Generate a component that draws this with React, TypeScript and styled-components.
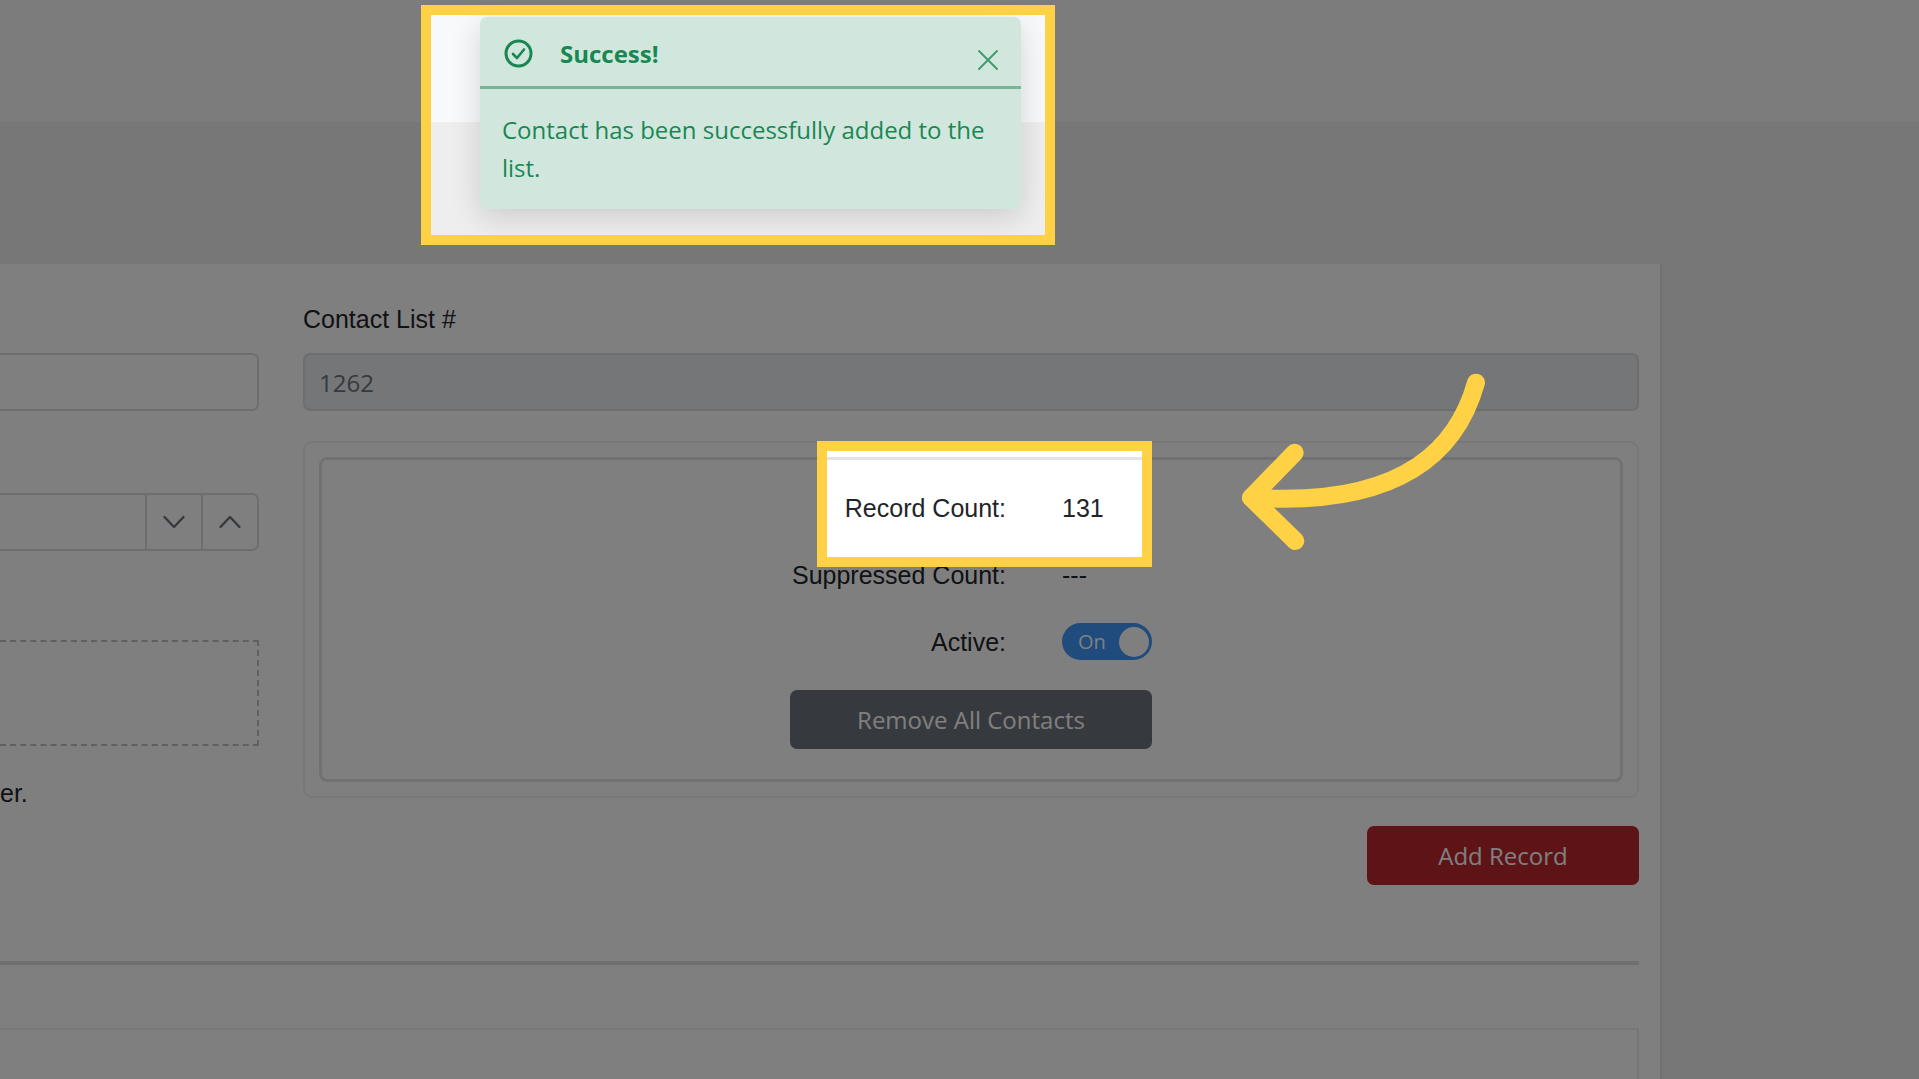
import React, { useState } from "react";
import styled, { createGlobalStyle } from "styled-components";

const sans = `"Liberation Sans", Arial, sans-serif`;
const ui = `"Segoe UI", "Open Sans", "Noto Sans", sans-serif`;
const highlight = "#ffd144";

const GlobalStyle = createGlobalStyle`
  *, *::before, *::after { box-sizing: border-box; }
  body { margin: 0; background: #eeeeee; color: #212529; font: 25px/39px ${sans}; }
  button, input { font-family: ${ui}; font-size: 24px; }
`;

const Page = styled.div`
  position: relative;
  min-height: 100vh;
  display: flex;
  flex-direction: column;
  overflow: hidden;
`;

const Header = styled.header`
  height: 122px;
  margin-bottom: 142px;
  background: #f8f9fb;
`;

const Card = styled.main`
  flex: 1;
  display: flex;
  flex-direction: column;
  margin-right: 257px;
  padding: 36px 21px 0 0;
  background: #ffffff;
  border-right: 2px solid #e2e2e2;
`;

const Columns = styled.div`
  display: grid;
  grid-template-columns: 259px minmax(0, 1fr);
  gap: 44px;
`;

const LeftColumn = styled.div`
  display: flex;
  flex-direction: column;
  padding-top: 53px;
`;

const RightColumn = styled.div`
  display: flex;
  flex-direction: column;
`;

const FieldLabel = styled.label`
  margin-bottom: 14px;
`;

const TextInput = styled.input<{ $openLeft?: boolean }>`
  width: 100%;
  height: 58px;
  padding: 0 14px;
  color: #6c757d;
  background: #ffffff;
  border: 2px solid #dadde1;
  border-left-width: ${(p) => (p.$openLeft ? 0 : "2px")};
  border-radius: ${(p) => (p.$openLeft ? "0 7px 7px 0" : "7px")};
  &:disabled {
    background: #e9ecef;
    opacity: 1;
  }
`;

const Stepper = styled.div`
  display: flex;
  height: 58px;
  margin: 82px 0 89px;
  border: 2px solid #dadde1;
  border-left: 0;
  border-radius: 0 7px 7px 0;
`;

const StepperInput = styled.input`
  flex: 1;
  min-width: 0;
  padding: 0 14px;
  border: 0;
  background: transparent;
`;

const StepButton = styled.button`
  width: 56px;
  padding: 0;
  display: grid;
  place-items: center;
  color: #6c757d;
  background: transparent;
  border: 0;
  border-left: 2px solid #dadde1;
`;

const DropZone = styled.div`
  height: 106px;
  margin-bottom: 28px;
  border: 2px dashed #bfc1c3;
  border-left: 0;
`;

const Hint = styled.p`
  margin: 0;
`;

const Summary = styled.section`
  margin: 30px 0 28px;
  padding: 14px;
  border: 2px solid #eef0ef;
  border-radius: 9px;
`;

const SummaryBody = styled.div`
  display: flex;
  justify-content: center;
  padding: 29px 0 30px;
  border: 3px solid #e1e3e6;
  border-radius: 8px;
`;

const Facts = styled.div`
  display: grid;
  grid-template-columns: 216px 90px;
  column-gap: 56px;
  row-gap: 28px;
`;

const FactLabel = styled.label`
  text-align: right;
  white-space: nowrap;
`;

const Switch = styled.span`
  position: relative;
  display: flex;
  align-items: center;
  justify-content: space-between;
  height: 37px;
  padding: 0 3px 0 16px;
  border-radius: 19px;
  background: #3e96fa;
  color: #ffffff;
  font: 20px/37px ${ui};
`;

const SwitchInput = styled.input`
  position: absolute;
  inset: 0;
  width: 100%;
  height: 100%;
  margin: 0;
  opacity: 0;
`;

const Knob = styled.span`
  width: 30px;
  height: 30px;
  border-radius: 50%;
  background: #ffffff;
`;

const ActionButton = styled.button<{ $tone: string }>`
  height: 59px;
  padding: 0;
  color: #ffffff;
  background: ${(p) => p.$tone};
  border: 0;
  border-radius: 7px;
`;

const RemoveButton = styled(ActionButton)`
  grid-column: 1 / -1;
`;

const AddButton = styled(ActionButton)`
  width: 272px;
  align-self: flex-end;
`;

const Divider = styled.hr`
  width: 100%;
  height: 4px;
  margin: 76px 0 63px;
  border: 0;
  background: #e1e1e1;
`;

const Records = styled.section`
  flex: 1;
  border: 2px solid #eceef2;
  border-width: 2px 2px 0 0;
`;

const Toast = styled.div`
  position: absolute;
  left: 480px;
  top: 17px;
  width: 541px;
  color: #198754;
  background: #d1e7dd;
  border-radius: 7px;
  box-shadow: 0 8px 30px rgba(0, 0, 0, 0.15);
  font: 24px/38px ${ui};
`;

const ToastHeader = styled.div`
  display: flex;
  align-items: center;
  gap: 27px;
  height: 72px;
  padding: 4px 22px 0 24px;
  border-bottom: 3px solid #75b798;
`;

const ToastTitle = styled.strong`
  flex: 1;
`;

const CloseButton = styled.button`
  display: grid;
  padding: 12px 0 0;
  color: #419b70;
  background: transparent;
  border: 0;
`;

const ToastMessage = styled.p`
  margin: 0;
  padding: 22px;
`;

const Shade = styled.div`
  position: absolute;
  inset: 0;
  pointer-events: none;
  background: rgba(0, 0, 0, 0.5);
  clip-path: polygon(
    evenodd,
    0 0, 100% 0, 100% 100%, 0 100%, 0 0,
    425px 9px, 1051px 9px, 1051px 241px, 425px 241px, 425px 9px,
    0 0,
    821px 445px, 1148px 445px, 1148px 563px, 821px 563px, 821px 445px,
    0 0
  );
`;

const Spotlight = styled.div<{ $x: number; $y: number; $w: number; $h: number }>`
  position: absolute;
  left: ${(p) => p.$x}px;
  top: ${(p) => p.$y}px;
  width: ${(p) => p.$w}px;
  height: ${(p) => p.$h}px;
  border: 10px solid ${highlight};
  pointer-events: none;
`;

const Arrow = styled.svg`
  position: absolute;
  left: 1200px;
  top: 340px;
  pointer-events: none;
`;

const Chevron = ({ up }: { up?: boolean }) => (
  <svg width="24" height="16" viewBox="0 0 24 16" fill="none" stroke="currentColor" strokeWidth="2.4" strokeLinecap="round" strokeLinejoin="round">
    <path d={up ? "M2.5 13 12 3l9.500 10" : "M2.500 3 12 13l9.500-10"} />
  </svg>
);

export default function App() {
  const [active, setActive] = useState(true);
  return (
    <Page>
      <GlobalStyle />
      <Header />
      <Card>
        <Columns>
          <LeftColumn>
            <TextInput $openLeft aria-label="List name" />
            <Stepper>
              <StepperInput aria-label="Priority" />
              <StepButton type="button" aria-label="Decrease"><Chevron /></StepButton>
              <StepButton type="button" aria-label="Increase"><Chevron up /></StepButton>
            </Stepper>
            <DropZone />
            <Hint>er.</Hint>
          </LeftColumn>
          <RightColumn>
            <FieldLabel htmlFor="list-number">Contact List #</FieldLabel>
            <TextInput id="list-number" defaultValue="1262" disabled />
            <Summary>
              <SummaryBody>
                <Facts>
                  <FactLabel as="span">Record Count:</FactLabel>
                  <span>131</span>
                  <FactLabel as="span">Suppressed Count:</FactLabel>
                  <span>---</span>
                  <FactLabel htmlFor="active">Active:</FactLabel>
                  <Switch>
                    <SwitchInput id="active" type="checkbox" role="switch" checked={active} onChange={(e) => setActive(e.target.checked)} />
                    <span>{active ? "On" : "Off"}</span>
                    <Knob />
                  </Switch>
                  <RemoveButton type="button" $tone="#6c757d">Remove All Contacts</RemoveButton>
                </Facts>
              </SummaryBody>
            </Summary>
            <AddButton type="button" $tone="#bc262e">Add Record</AddButton>
          </RightColumn>
        </Columns>
        <Divider />
        <Records />
      </Card>

      <Toast role="alert">
        <ToastHeader>
          <svg width="29" height="29" viewBox="0 0 29 29" fill="none" stroke="currentColor" strokeLinecap="round" strokeLinejoin="round">
            <circle cx="14.500" cy="14.500" r="12.500" strokeWidth="3" />
            <path d="M9 15l4 4 7-8.500" strokeWidth="2.600" />
          </svg>
          <ToastTitle>Success!</ToastTitle>
          <CloseButton type="button" aria-label="Close">
            <svg width="22" height="22" viewBox="0 0 22 22" fill="none" stroke="currentColor" strokeWidth="2" strokeLinecap="round">
              <path d="M2 2l18 18M20 2 2 20" />
            </svg>
          </CloseButton>
        </ToastHeader>
        <ToastMessage>Contact has been successfully added to the list.</ToastMessage>
      </Toast>

      <Shade />
      <Spotlight $x={421} $y={5} $w={634} $h={240} />
      <Spotlight $x={817} $y={441} $w={335} $h={126} />
      <Arrow width="340" height="240" viewBox="0 0 1020 720" fill="none" stroke={highlight} strokeWidth="54" strokeLinecap="round" strokeLinejoin="round">
        <path d="M828 128C780 300 640 505 153 473" />
        <path d="M284 338 153 473l133 130" />
      </Arrow>
    </Page>
  );
}
